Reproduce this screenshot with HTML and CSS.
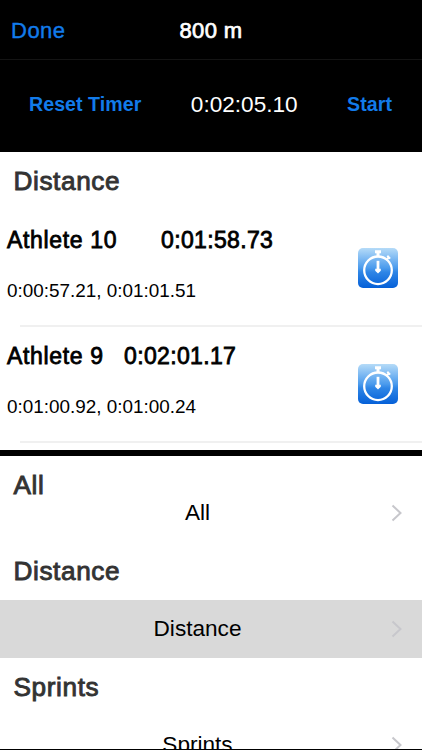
FILE: index.html
```html
<!DOCTYPE html>
<html>

<head>
    <meta charset="utf-8">
    <title>800 m</title>
    <link rel="stylesheet" href="styles.css">
</head>

<body>
    <svg class="defs" width="0" height="0">
        <defs>
            <linearGradient id="watchFill" x1="0" y1="0" x2="0" y2="1">
                <stop offset="0" stop-color="#b5dbf8"/>
                <stop offset="0.5" stop-color="#4b9bed"/>
                <stop offset="0.6" stop-color="#2f86e6"/>
                <stop offset="1" stop-color="#0560d8"/>
            </linearGradient>
            <symbol id="stopwatch" viewBox="0 0 40 40">
                <rect width="40" height="40" rx="5" fill="url(#watchFill)"/>
                <circle cx="20" cy="22.3" r="13.8" fill="none" stroke="#fff" stroke-width="2.3"/>
                <path d="M17 3.8h6M20 4v4" fill="none" stroke="#fff" stroke-width="3"/>
                <path d="M28.2 12l2.8-2.8" fill="none" stroke="#fff" stroke-width="2"/>
                <path d="M29.3 7.8l2.8 2.8" fill="none" stroke="#fff" stroke-width="2"/>
                <path d="M20 12.8v11" stroke="#fff" stroke-width="2.8"/>
                <path d="M17.2 20.8h5.6v2L20 25.6l-2.8-2.8z" fill="#fff"/>
            </symbol>
            <symbol id="chevron" viewBox="0 0 12 18">
                <path d="M1.5 1.5L9.5 9l-8 7.5" fill="none" stroke="currentColor" stroke-width="2"/>
            </symbol>
        </defs>
    </svg>

    <div class="navbar">
        <a class="done">Done</a>
        <div class="title">800 m</div>
    </div>

    <div class="timer-bar">
        <a class="timer-button">Reset Timer</a>
        <div class="clock">0:02:05.10</div>
        <a class="timer-button">Start</a>
    </div>

    <div class="results">
        <h2>Distance</h2>
        <div class="athlete">
            <div class="info">
                <div class="total"><span class="name wide">Athlete 10</span><span class="time">0:01:58.73</span></div>
                <div class="splits">0:00:57.21, 0:01:01.51</div>
            </div>
            <svg class="stopwatch"><use href="#stopwatch"/></svg>
        </div>
        <div class="athlete">
            <div class="info">
                <div class="total"><span class="name">Athlete 9</span><span class="time">0:02:01.17</span></div>
                <div class="splits">0:01:00.92, 0:01:00.24</div>
            </div>
            <svg class="stopwatch"><use href="#stopwatch"/></svg>
        </div>
    </div>

    <div class="groups">
        <h2 class="pinned">All</h2>
        <div class="group"><span>All</span><svg class="chevron"><use href="#chevron"/></svg></div>
        <h2>Distance</h2>
        <div class="group selected"><span>Distance</span><svg class="chevron"><use href="#chevron"/></svg></div>
        <h2>Sprints</h2>
        <div class="group"><span>Sprints</span><svg class="chevron"><use href="#chevron"/></svg></div>
    </div>
</body>

</html>
```

FILE: styles.css
```css
body {
    font-family: "Liberation Sans", Arial, sans-serif;
    margin: 0;
    background-color: #000;
    color: #000;
    height: 750px;
    overflow: hidden;
    display: flex;
    flex-direction: column;
}

.defs {
    display: block;
    flex: none;
}

.navbar {
    display: grid;
    grid-template-columns: 1fr auto 1fr;
    align-items: center;
    height: 60px;
    padding: 2px 0 0;
    box-sizing: border-box;
    border-bottom: 1px solid #141414;
    font-size: 22px;
}

.done {
    padding-left: 11px;
    color: #127bea;
    letter-spacing: 0.5px;
    -webkit-text-stroke: 0.4px #127bea;
}

.title {
    color: white;
    letter-spacing: 0.4px;
    -webkit-text-stroke: 0.7px white;
}

.timer-bar {
    display: flex;
    justify-content: space-between;
    align-items: center;
    height: 92px;
    padding: 0 30px 3px 29px;
    box-sizing: border-box;
}

.timer-button {
    color: #127bea;
    font-size: 19.6px;
    font-weight: bold;
    letter-spacing: 0.05px;
}

.clock {
    color: white;
    font-size: 22.6px;
}

.results {
    height: 298px;
    background-color: white;
    overflow: hidden;
}

h2 {
    margin: 0;
    padding-left: 13.5px;
    height: 58px;
    line-height: 59px;
    font-size: 26.2px;
    font-weight: normal;
    letter-spacing: 0.6px;
    color: #333;
    -webkit-text-stroke: 0.9px #333;
}

.results h2 {
    height: 59px;
}

.athlete {
    display: flex;
    justify-content: space-between;
    align-items: center;
    height: 116px;
    padding: 0 24px 0 7px;
    box-sizing: border-box;
    background: linear-gradient(#f0f0f0, #f0f0f0) 20px 100% / 100% 2px no-repeat;
}

.info {
    padding-bottom: 10px;
}

.total {
    display: flex;
    font-size: 23px;
    line-height: 30px;
    -webkit-text-stroke: 0.8px #000;
}

.name {
    width: 117px;
    letter-spacing: 0.65px;
}

.name.wide {
    width: 154px;
}

.time {
    letter-spacing: 0.35px;
}

.splits {
    margin-top: 24px;
    font-size: 18.9px;
    line-height: 24px;
}

.stopwatch {
    width: 40px;
    height: 40px;
    margin-bottom: 2px;
}

.groups {
    height: 293px;
    margin-top: 6px;
    background-color: white;
    overflow: hidden;
}

.pinned {
    margin-bottom: -30px;
}

.group {
    display: grid;
    grid-template-columns: 1fr 12px;
    align-items: center;
    height: 58px;
    padding: 0 19px 0 4px;
    box-sizing: border-box;
    font-size: 22.6px;
    text-align: center;
}

.group.selected {
    background-color: #d9d9d9;
}

.chevron {
    width: 12px;
    height: 18px;
    color: #c7c7cc;
}
```
